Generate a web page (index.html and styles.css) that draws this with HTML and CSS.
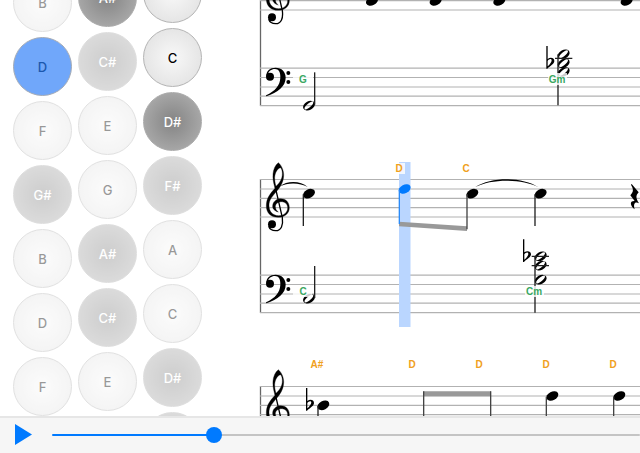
FILE: index.html
```html
<!DOCTYPE html>
<html lang="en">
<head>
  <meta charset="UTF-8" />
  <meta name="viewport" content="width=device-width, initial-scale=1.0"/>
  <title>Accordion Player</title>
  <link rel="stylesheet" href="styles.css">
</head>
<body>
  <svg class="defs" width="0" height="0" aria-hidden="true">
    <defs>
      <g id="staff">
        <path class="barline" d="M10.5 29V163"/>
        <g class="lines">
          <line x1="10" x2="100%" y1="29.5" y2="29.5"/>
          <line x1="10" x2="100%" y1="39" y2="39"/>
          <line x1="10" x2="100%" y1="48.3" y2="48.3"/>
          <line x1="10" x2="100%" y1="57.6" y2="57.6"/>
          <line x1="10" x2="100%" y1="67" y2="67"/>
          <line x1="10" x2="100%" y1="125.2" y2="125.2"/>
          <line x1="10" x2="100%" y1="134.5" y2="134.5"/>
          <line x1="10" x2="100%" y1="144" y2="144"/>
          <line x1="10" x2="100%" y1="153.2" y2="153.2"/>
          <line x1="10" x2="100%" y1="162.6" y2="162.6"/>
        </g>
        <g transform="scale(.33333)">
          <!-- treble clef -->
          <path class="bold" fill-rule="evenodd" d="M85 38C97 48 102 66 101 78C100 98 90 112 80 124C67 139 57 150 57 166C57 185 68 197 86 197C102 197 113 187 113 173C113 161 104 155 95 155C84 155 77 161 76 169C76 177 80 183 85 186C73 183 67 175 68 167C69 154 80 146 92 146C107 146 118 156 118 173C118 190 104 202 84 202C62 202 49 188 49 168C49 147 58 133 75 115C70 97 68 86 69 72C70 58 76 45 85 38ZM91 53C82 56 75 68 74 82C74 92 75 99 78 109C89 98 97 87 97 71C97 62 95 55 91 53Z"/>
          <path class="stroke" d="M76 112L97 203C100 225 94 242 77 242C67 242 59 238 56 229"/>
          <circle cx="66" cy="223" r="12"/>
          <!-- bass clef -->
          <path d="M49 400C48 384 60 374 77 374C95 374 107 386 107 404C107 430 84 447 49 460L48 457C76 443 90 428 91 404C92 388 86 378 75 378C63 378 56 385 54 393Z"/>
          <circle cx="60" cy="401" r="12"/>
          <circle cx="115" cy="390" r="6"/>
          <circle cx="115" cy="417" r="6"/>
        </g>
      </g>
      <ellipse id="head" rx="19" ry="13" transform="rotate(-27)"/>
      <path id="half" fill-rule="evenodd" transform="rotate(-27)" d="M-19 0A19 13 0 1 1 19 0A19 13 0 1 1 -19 0ZM-16 4C-13 10 19 3 16 -5C12 -11 -19 -4 -16 4Z"/>
      <path id="flat" fill-rule="evenodd" d="M0 0H4V39C12 33 24 35 24 45C24 54 12 59 3 68H0ZM4 45V61C10 56 16 49 16 43C15 37 8 39 4 45Z"/>
      <path id="rest" d="M5 0L26 25C17 35 17 42 27 58C16 52 9 57 14 76C1 66 -3 50 14 51L1 34C11 23 11 16 3 2Z"/>
    </defs>
  </svg>

  <main class="stage">
    <section class="keyboard" aria-label="Button layout">
      <div class="column first">
        <button class="key">B</button>
        <button class="key playing">D</button>
        <button class="key">F</button>
        <button class="key sharp">G#</button>
        <button class="key">B</button>
        <button class="key">D</button>
        <button class="key">F</button>
      </div>
      <div class="column second">
        <button class="key sharp on">A#</button>
        <button class="key sharp">C#</button>
        <button class="key">E</button>
        <button class="key">G</button>
        <button class="key sharp">A#</button>
        <button class="key sharp">C#</button>
        <button class="key">E</button>
        <button class="key">G</button>
      </div>
      <div class="column">
        <button class="key on">A</button>
        <button class="key on">C</button>
        <button class="key sharp on">D#</button>
        <button class="key sharp">F#</button>
        <button class="key">A</button>
        <button class="key">C</button>
        <button class="key sharp">D#</button>
        <button class="key sharp">F#</button>
      </div>
    </section>

    <section class="score" aria-label="Score">
      <svg class="system">
        <use href="#staff"/>
        <g transform="scale(.33333)">
          <use href="#head" x="366" y="174"/>
          <use href="#head" x="557" y="174"/>
          <use href="#head" x="748" y="174"/>
          <use href="#head" x="1130" y="174"/>
          <use href="#half" x="177" y="488"/>
          <path class="stem" d="M194 388V485"/>
          <use href="#flat" x="889" y="309"/>
          <use href="#half" x="941" y="334"/>
          <use href="#half" x="941" y="361"/>
          <use href="#half" x="941" y="387"/>
          <path class="stem" d="M915 346H967M924 334V487"/>
        </g>
        <rect class="tag" x="43" y="130" width="20" height="12"/>
        <text class="chord" x="53" y="140">G</text>
        <rect class="tag" x="298" y="130" width="19" height="12"/>
        <text class="chord" x="307" y="140">Gm</text>
      </svg>

      <svg class="system">
        <use href="#staff"/>
        <rect class="cursor" x="149" y="12" width="11.5" height="165"/>
        <g transform="scale(.33333)">
          <path d="M90 109C110 91 152 91 173 111C150 97 112 97 90 109Z"/>
          <use href="#head" x="177" y="131"/>
          <path class="stem" d="M160 133V228"/>
          <path class="beam" d="M447 215L651 229V243L447 229Z"/>
          <g class="current">
            <use href="#head" x="464" y="117"/>
            <path class="stem" d="M448 119V222"/>
          </g>
          <use href="#head" x="667" y="131"/>
          <path class="stem thin" d="M651 133V238"/>
          <path d="M675 112C725 80 815 80 866 112C815 86 725 86 675 112Z"/>
          <use href="#head" x="872" y="131"/>
          <path class="stem" d="M855 133V228"/>
          <use href="#rest" x="1140" y="102"/>
          <use href="#half" x="177" y="446"/>
          <path class="stem" d="M194 348V444"/>
          <use href="#flat" x="819" y="268"/>
          <use href="#half" x="872" y="319"/>
          <use href="#half" x="872" y="347"/>
          <use href="#half" x="872" y="389"/>
          <path class="stem" d="M845 319H897M845 347H897M855 319V488"/>
        </g>
        <rect class="tag" x="142" y="13" width="13" height="11"/>
        <text class="melody" x="149" y="22">D</text>
        <text class="melody" x="216" y="22">C</text>
        <rect class="tag" x="43" y="136" width="19" height="11"/>
        <text class="chord" x="53" y="145">C</text>
        <rect class="tag" x="275" y="136" width="19" height="11"/>
        <text class="chord" x="284" y="145">Cm</text>
      </svg>

      <svg class="system">
        <use href="#staff"/>
        <g transform="scale(.33333)">
          <use href="#flat" x="168" y="93"/>
          <use href="#head" x="220" y="145"/>
          <path class="stem" d="M204 147V242"/>
          <path class="beam" d="M520 103H723V118H520Z"/>
          <path class="stem thin" d="M521 103V220M722 103V220"/>
          <use href="#head" x="907" y="117"/>
          <path class="stem thin" d="M889 119V214"/>
          <use href="#head" x="1108" y="117"/>
          <path class="stem thin" d="M1091 119V214"/>
        </g>
        <text class="melody" x="67" y="11">A#</text>
        <text class="melody" x="162" y="11">D</text>
        <text class="melody" x="229" y="11">D</text>
        <text class="melody" x="296" y="11">D</text>
        <text class="melody" x="363" y="11">D</text>
      </svg>
    </section>
  </main>

  <footer class="player">
    <button class="play" aria-label="Play">
      <svg width="17" height="21" viewBox="0 0 17 21"><path d="M0 0L17 10.5L0 21Z"/></svg>
    </button>
    <input class="seek" type="range" min="0" max="100" value="27" aria-label="Position" style="--played: 27%">
  </footer>

  <script>
    const seekEl = document.querySelector(".seek");

    seekEl.addEventListener("input", () => {
      seekEl.style.setProperty("--played", seekEl.value + "%");
    });
  </script>
</body>
</html>
```
FILE: styles.css
```css
body {
  margin: 0;
  height: 100vh;
  display: flex;
  flex-direction: column;
  overflow: hidden;
  background: #fff;
  font-family: Inter, "Liberation Sans", sans-serif;
}

.defs {
  position: absolute;
}

.stage {
  flex: 1;
  min-height: 0;
  display: flex;
  overflow: hidden;
}

/* button layout */

.keyboard {
  flex: none;
  display: flex;
  gap: 6px;
  margin-top: -36px;
  padding: 0 48px 0 13px;
}

.column {
  display: flex;
  flex-direction: column;
  gap: 5px;
}

.first {
  padding-top: 9px;
}

.second {
  padding-top: 4px;
}

.key {
  flex: none;
  width: 59px;
  height: 59px;
  padding: 0;
  border: 1px solid #b4b4b4;
  border-radius: 50%;
  background: radial-gradient(circle, #f8f8f8, #dedede);
  color: #000;
  font-family: inherit;
  font-size: 13px;
  font-weight: 500;
  opacity: 0.4;
}

.sharp {
  border-color: #aaa;
  background: radial-gradient(circle, #848484, #b4b4b4);
  color: #fff;
}

.on {
  opacity: 1;
}

.playing {
  border-color: #a5abb5;
  background: #70a7fa;
  color: #1c57ad;
  opacity: 1;
}

/* score */

.score {
  flex: 1;
  min-width: 0;
  margin-top: -57px;
}

.system {
  display: block;
  width: 100%;
  height: 207px;
  overflow: visible;
}

.lines {
  stroke: #b2b2b2;
  stroke-width: 1.2;
}

.barline {
  stroke: #666;
  stroke-width: 1.3;
}

.bold {
  stroke: #000;
  stroke-width: 1;
}

.stroke {
  fill: none;
  stroke: #000;
  stroke-width: 4;
}

.stem {
  stroke: #222;
  stroke-width: 4;
}

.thin {
  stroke: #444;
}

.beam {
  fill: #999;
}

.cursor {
  fill: #bad6ff;
}

.current {
  fill: #007aff;
}

.current .stem {
  stroke: #2b8bf8;
}

.tag {
  fill: #fff;
  fill-opacity: 0.8;
}

.melody,
.chord {
  fill: #f0a020;
  font-family: "Liberation Sans", sans-serif;
  font-size: 10px;
  font-weight: 700;
  text-anchor: middle;
}

.chord {
  fill: #3aa862;
}

/* player */

.player {
  flex: none;
  display: flex;
  align-items: center;
  gap: 20px;
  height: 33px;
  padding: 0 0 2px 15px;
  border-top: 2px solid #e6e6e6;
  background: #f6f6f6;
}

.play {
  display: flex;
  padding: 0;
  border: none;
  background: none;
}

.play path {
  fill: #007aff;
}

.seek {
  flex: 1;
  min-width: 0;
  height: 16px;
  margin: 0;
  appearance: none;
  background: none;
}

.seek::-webkit-slider-runnable-track {
  height: 2px;
  border-radius: 1px;
  background: linear-gradient(to right, #007aff var(--played), #c4c4c4 var(--played));
}

.seek::-webkit-slider-thumb {
  width: 16px;
  height: 16px;
  margin-top: -7px;
  appearance: none;
  border-radius: 50%;
  background: #007aff;
}
```
